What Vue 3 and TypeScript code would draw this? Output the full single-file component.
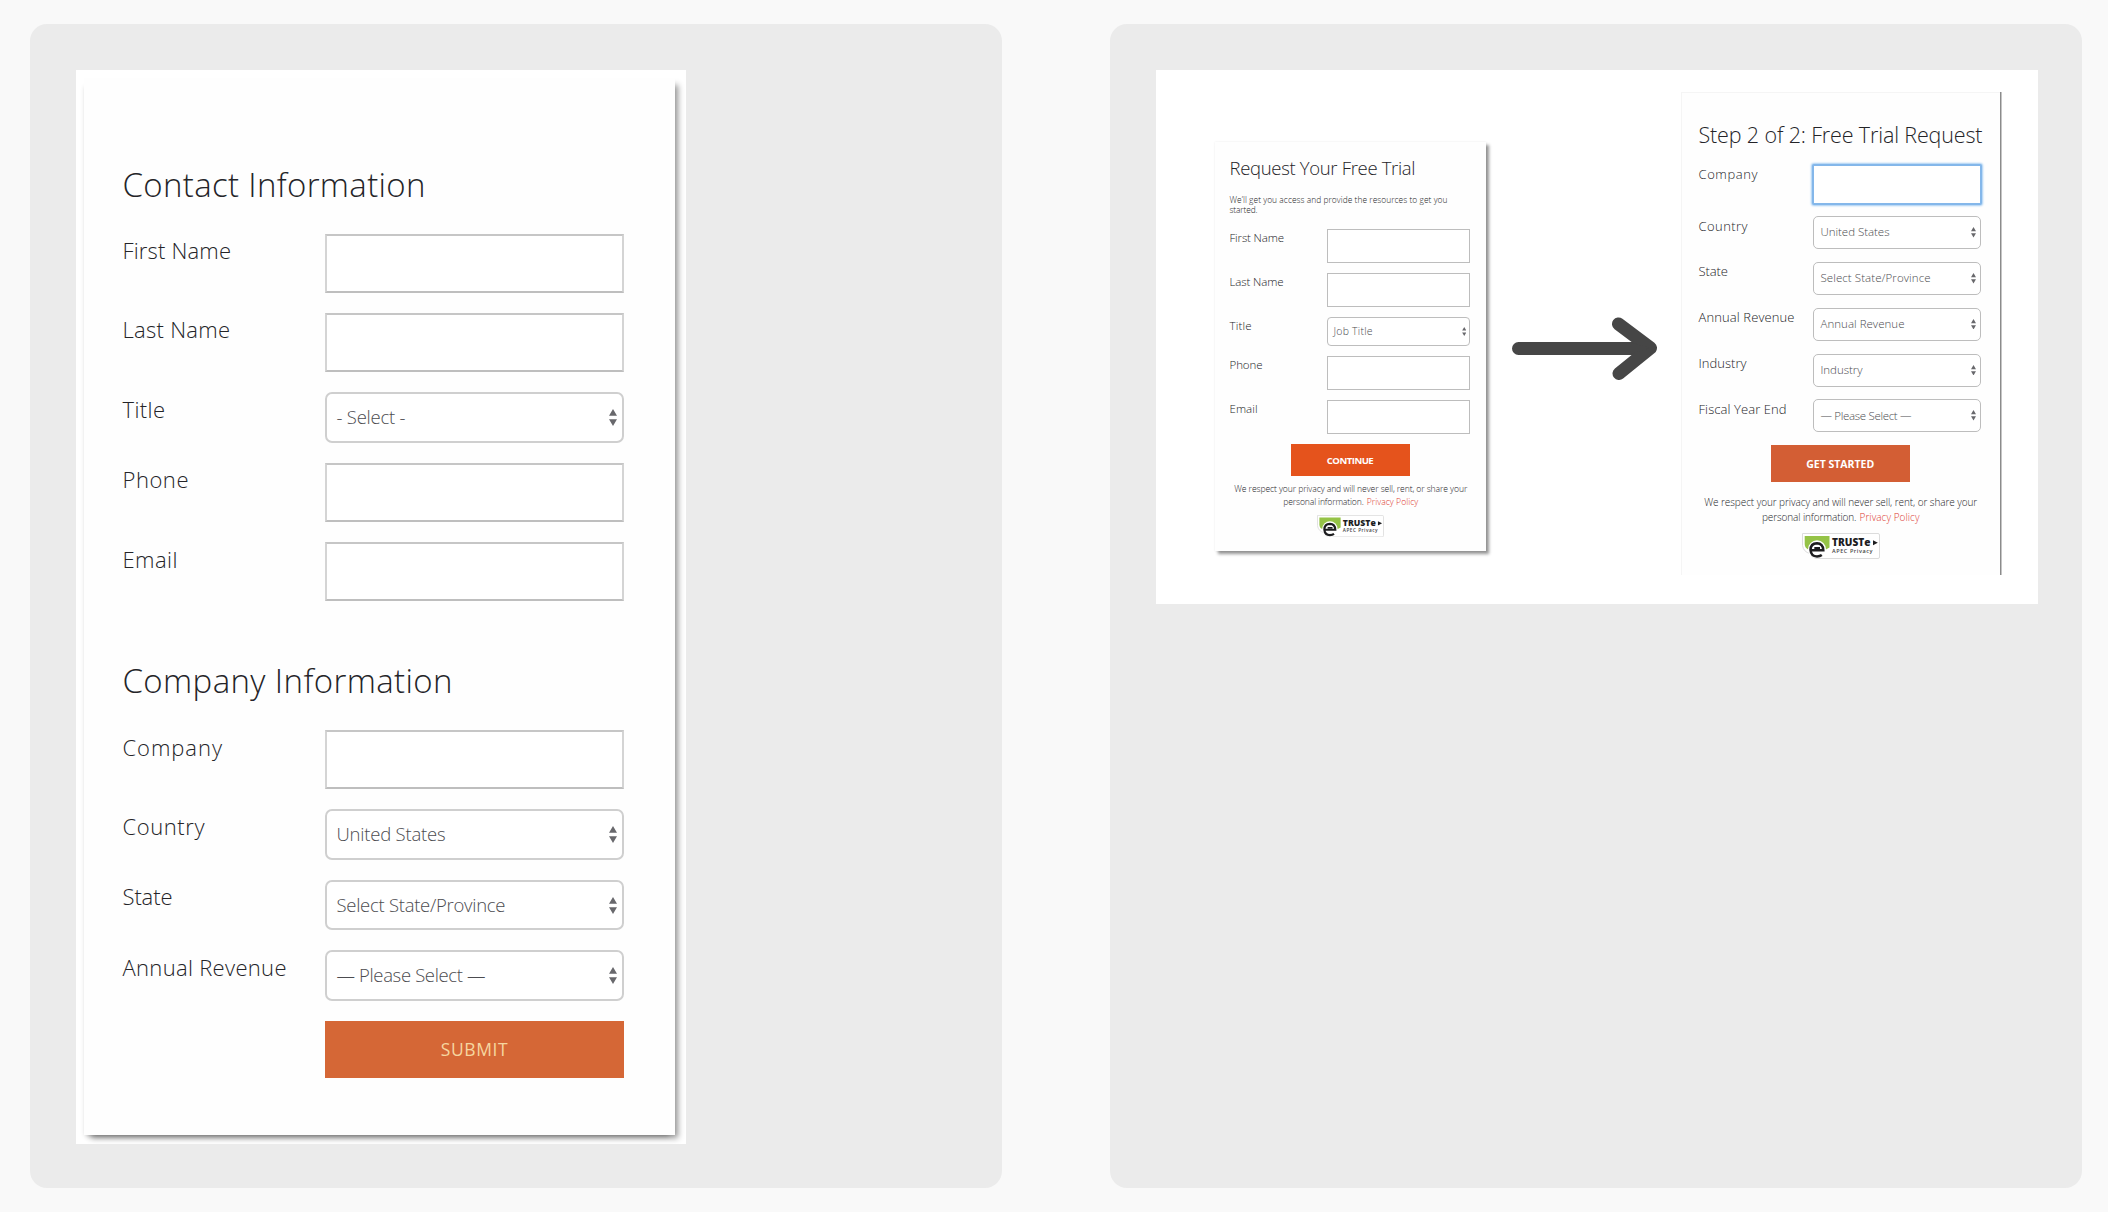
<script setup lang="ts">
interface Field {
  label: string
  width: number
  value?: string
  valueWidth?: number
  focus?: boolean
}

// Tracks a line of text so that it spans the given width in pixels.
const vFit = {
  mounted(el: HTMLElement, binding: { value: number }) {
    const natural = el.getBoundingClientRect().width
    const count = (el.textContent || '').trim().length
    if (count > 1) {
      const step = (binding.value - natural) / (count - 1)
      el.style.letterSpacing = `${step.toFixed(3)}px`
      el.style.marginRight = `${(-step).toFixed(3)}px`
    }
  },
}

const contact: Field[] = [
  { label: 'First Name', width: 108.5 },
  { label: 'Last Name', width: 107.5 },
  { label: 'Title', width: 42.5, value: '- Select -', valueWidth: 69 },
  { label: 'Phone', width: 66 },
  { label: 'Email', width: 55 },
]

const company: Field[] = [
  { label: 'Company', width: 99.5 },
  { label: 'Country', width: 82, value: 'United States', valueWidth: 109 },
  { label: 'State', width: 50, value: 'Select State/Province', valueWidth: 169 },
  { label: 'Annual Revenue', width: 164, value: '— Please Select —', valueWidth: 149 },
]

const sections = [
  { title: 'Contact Information', width: 303, fields: contact },
  { title: 'Company Information', width: 330, fields: company },
]

const stepOne: Field[] = [
  { label: 'First Name', width: 54.5 },
  { label: 'Last Name', width: 54 },
  { label: 'Title', width: 22, value: 'Job Title', valueWidth: 39 },
  { label: 'Phone', width: 33 },
  { label: 'Email', width: 28 },
]

const stepTwo: Field[] = [
  { label: 'Company', width: 59, focus: true },
  { label: 'Country', width: 49, value: 'United States', valueWidth: 69 },
  { label: 'State', width: 29.5, value: 'Select State/Province', valueWidth: 110 },
  { label: 'Annual Revenue', width: 96, value: 'Annual Revenue', valueWidth: 84 },
  { label: 'Industry', width: 48, value: 'Industry', valueWidth: 42 },
  { label: 'Fiscal Year End', width: 88, value: '— Please Select —', valueWidth: 91 },
]

const trials = [
  {
    id: 'one', title: 'Request Your Free Trial', width: 186,
    intro: [{ text: 'We’ll get you access and provide the resources to get you', width: 218 }, { text: 'started.', width: 28 }],
    fields: stepOne, button: 'CONTINUE', buttonWidth: 47,
    privacy: [233, 80.5, 51.5],
  },
  {
    id: 'two', title: 'Step 2 of 2: Free Trial Request', width: 284,
    intro: [],
    fields: stepTwo, button: 'GET STARTED', buttonWidth: 68,
    privacy: [273, 94.5, 60],
  },
]
</script>

<template>
  <main class="page">
    <section class="panel">
      <div class="sheet long-sheet">
        <form class="card long" @submit.prevent>
          <section v-for="s in sections" :key="s.title" class="group">
            <h2><span v-fit="s.width" class="line">{{ s.title }}</span></h2>
            <div class="rows">
              <div v-for="f in s.fields" :key="f.label" class="row">
                <label><span v-fit="f.width" class="line">{{ f.label }}</span></label>
                <div v-if="f.value" class="select">
                  <span v-fit="f.valueWidth" class="line">{{ f.value }}</span>
                  <svg class="carets" viewBox="0 0 8 17"><path d="M4 0 8 6.8H0ZM0 10.2h8L4 17Z" /></svg>
                </div>
                <div v-else class="input"></div>
              </div>
            </div>
          </section>
          <button class="action"><span v-fit="67" class="line">SUBMIT</span></button>
        </form>
      </div>
    </section>

    <section class="panel">
      <div class="sheet steps-sheet">
        <template v-for="t in trials" :key="t.id">
          <svg v-if="t.id === 'two'" class="arrow" viewBox="0 0 146 64">
            <path d="M6.5 32.5H138M106.500 8 138.500 32 107 57.500" />
            <path class="fill" d="M119 26.500 138 32 119 38Z" />
          </svg>
          <form class="card trial" :class="t.id" @submit.prevent>
            <h2><span v-fit="t.width" class="line">{{ t.title }}</span></h2>
            <p v-if="t.intro.length" class="intro">
              <span v-for="i in t.intro" :key="i.text" v-fit="i.width" class="line">{{ i.text }}</span>
            </p>
            <div class="rows">
              <div v-for="f in t.fields" :key="f.label" class="row">
                <label><span v-fit="f.width" class="line">{{ f.label }}</span></label>
                <div v-if="f.value" class="select">
                  <span v-fit="f.valueWidth" class="line">{{ f.value }}</span>
                  <svg class="carets" viewBox="0 0 8 17"><path d="M4 0 8 6.8H0ZM0 10.2h8L4 17Z" /></svg>
                </div>
                <div v-else class="input" :class="{ focus: f.focus }"></div>
              </div>
            </div>
            <button class="action"><span v-fit="t.buttonWidth" class="line">{{ t.button }}</span></button>
            <div class="privacy">
              <div><span v-fit="t.privacy[0]" class="line">We respect your privacy and will never sell, rent, or share your</span></div>
              <div class="second">
                <span v-fit="t.privacy[1]" class="line">personal information.</span>
                <a v-fit="t.privacy[2]" class="line">Privacy Policy</a>
              </div>
            </div>
            <svg class="badge" viewBox="0 0 78 26">
              <path class="frame" d="M.5.5H76q1.500 0 1.500 1.500V24q0 1.500-1.500 1.500H14Q10 25 8 20.500 1.500 19 .5 12.500Z" />
              <path class="green" d="M2.700 3H27.500V14.500L23 17H7.500Q2.700 15.500 2.700 11Z" />
              <circle class="halo" cx="15" cy="16.300" r="9" />
              <path class="mark" d="M9.500 17.200H21.300Q21 10.500 15 10.300 8.500 10.500 8.500 17 9 23.300 15 23.400 18 23.300 19.800 22" />
              <path class="mark thin" d="M12.300 15H18" />
              <text class="name" x="30" y="13.300" textLength="38.500" lengthAdjust="spacingAndGlyphs">TRUSTe</text>
              <path class="dark" d="M71 7.200 75.800 9.700 71 12.200Z" />
              <text class="sub" x="30" y="20.300" textLength="40.500" lengthAdjust="spacing">APEC Privacy</text>
            </svg>
          </form>
        </template>
      </div>
    </section>
  </main>
</template>

<style>
body { margin: 0; background: #f9f9f9; }
</style>

<style scoped>
* { box-sizing: border-box; }
.page {
  display: flex; gap: 108px; width: 2108px; height: 1212px; padding: 24px 26px 24px 30px;
  background: #f9f9f9; color: #242428; font-family: "Open Sans", "Noto Sans", sans-serif; font-weight: 300;
}
.panel { width: 972px; height: 1164px; padding: 46px; border-radius: 17px; background: #ebebeb; }
.sheet { overflow: hidden; background: #fff; }
.line { display: inline-block; white-space: nowrap; }
h2, p { margin: 0; font-weight: 300; }
.card { display: flex; flex-direction: column; background: #fefefe; }
.rows { display: flex; flex-direction: column; }
.row { display: flex; justify-content: space-between; }
.input, .select { background: #fff; border: 1.500px solid #bdbdbd; }
.select { display: flex; align-items: center; justify-content: space-between; color: #4c4c50; }
.carets { fill: #68686c; flex: none; }
.action { display: flex; align-items: center; justify-content: center; border: 0; padding: 0; font-family: inherit; }

/* single long form */
.long-sheet { width: 610px; height: 1074px; padding: 8px 11px 9px 8px; }
.long { width: 591px; height: 1057px; padding: 86.600px 51px 0 38.500px; box-shadow: 5px 5px 6px -2px rgba(0, 0, 0, .42), -2px 5px 5px -4px rgba(0, 0, 0, .3); }
.long .group + .group { margin-top: 59.900px; }
.long h2 { height: 40px; line-height: 40px; margin-bottom: 29px; font-size: 33px; }
.long .rows { gap: 20px; }
.long label { padding-top: 1.700px; font-size: 22px; line-height: 30px; height: 30px; }
.long .input, .long .select { width: 299.500px; height: 59.200px; border-width: 2px; border-color: #c6c6c6 #d4d4d4 #bebebe; }
.long .select { height: 50.700px; padding: 0 5.500px 2px 10px; border-radius: 7px; border-color: #cfcfcf; font-size: 18.500px; }
.long .carets { width: 8px; height: 17px; margin-top: 2px; }
.long .action { align-self: flex-end; width: 299.500px; height: 57px; margin-top: 19.800px; background: #d56736; color: #f5d6a0; font-size: 17.500px; font-weight: 400; }

/* two-step form */
.steps-sheet { display: flex; align-items: flex-start; width: 882px; height: 534px; padding: 21.700px 38px 0 58.500px; }
.intro { display: flex; flex-direction: column; align-items: flex-start; }
.trial .action { align-self: center; color: #fff; font-weight: 700; }
.privacy { text-align: center; color: #242428; }
.second { display: flex; justify-content: center; }
.second a { color: #dd3a30; }
.badge { align-self: center; flex: none; }
.arrow { width: 146px; height: 64px; margin: 224.300px 0 0 25.500px; fill: none; stroke: #464646; stroke-width: 13; stroke-linecap: round; stroke-linejoin: round; flex: none; }
.arrow .fill { fill: #464646; stroke: none; }

.one { width: 271.500px; height: 409px; margin-top: 50.300px; padding: 14.300px 16px 0 15px; box-shadow: 3px 3px 3px 0 rgba(0, 0, 0, .42), 0 0 2px rgba(0, 0, 0, .08); flex: none; }
.one h2 { height: 24px; line-height: 24px; font-size: 18.500px; }
.one .intro { margin: 14.400px 0 13.500px; height: 20.800px; font-size: 8.400px; line-height: 10.400px; }
.one .rows { gap: 10.400px; }
.one label { height: 14px; padding-top: 1.700px; font-size: 11.500px; line-height: 14px; }
.one .input, .one .select { width: 143.500px; height: 33.600px; }
.one .select { height: 28.600px; padding: 0 3px .5px 6px; border-radius: 4px; font-size: 10.500px; }
.one .carets { width: 4.500px; height: 9px; margin-top: 1px; }
.one .action { width: 119px; height: 32px; margin: 10.700px 0 0 1px; background: #e5531c; font-size: 9.600px; }
.one .privacy { margin: 6.800px 0 0 2px; font-size: 8.600px; line-height: 12.700px; }
.one .second { gap: 3px; }
.one .badge { width: 67px; height: 22.300px; margin: 6.500px 0 0 1px; }

.two { width: 319px; height: 483.500px; margin-left: 23.500px; padding: 28px 19px 0 16.500px; flex: none; border: solid #f5f5f5; border-width: 1px 0 0 1px; box-shadow: 1.500px 0 0 #8b8b8b; }
.two h2 { height: 28px; line-height: 28px; margin-bottom: 15px; font-size: 21.500px; }
.two .rows { gap: 12.800px; }
.two .row:first-child { height: 39.700px; }
.two label { height: 16px; padding-top: 1.400px; font-size: 13px; line-height: 16px; }
.two .row:first-child label { padding-top: 2.300px; }
.two .input { width: 170px; height: 41px; margin-right: -.5px; border: 2.500px solid #84b7ea; border-radius: 2px; box-shadow: 0 0 2px 1px #a5cdf3; }
.two .select { width: 168.500px; height: 33px; padding: 0 4px 1.400px 7px; border-radius: 5px; font-size: 11.500px; }
.two .carets { width: 5px; height: 10.500px; margin-top: 1px; }
.two .action { width: 139px; height: 37px; margin: 12.800px 0 0 1px; background: #d35e34; font-size: 10.500px; }
.two .privacy { margin: 13.200px 0 0 2px; font-size: 10px; line-height: 14.700px; }
.two .second { gap: 3px; }
.two .badge { width: 78px; height: 26px; margin: 8.500px 0 0 2px; }

.frame { fill: #fff; stroke: #dcdcdc; }
.green { fill: #95c347; }
.halo { fill: #fff; }
.mark { fill: none; stroke: #1d1d1f; stroke-width: 2.500; }
.thin { stroke-width: 2; }
.dark { fill: #1d1d1f; }
.name { fill: #1d1d1f; font-size: 10px; font-weight: 800; }
.sub { fill: #444; font-size: 5.500px; font-weight: 600; }
</style>
